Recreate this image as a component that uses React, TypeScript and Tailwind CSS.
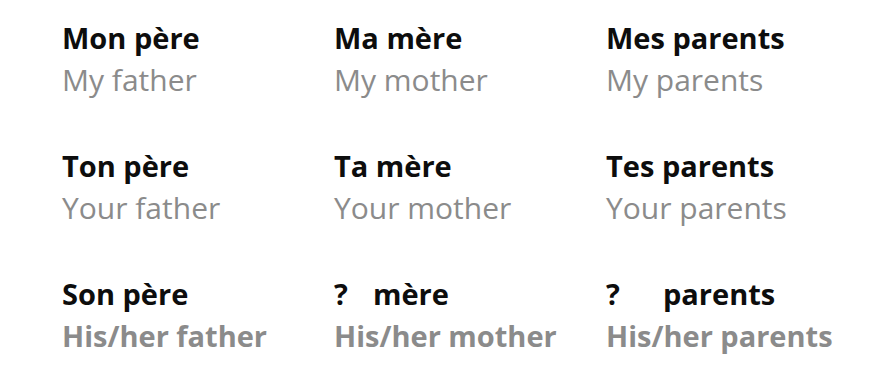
import React from 'react';

type Cell = {
  fr: React.ReactNode;
  en: string;
};

// possessive adjective table, three rows by three columns
const rows: Cell[][] = [
  [
    { fr: 'Mon père', en: 'My father' },
    { fr: 'Ma mère', en: 'My mother' },
    { fr: 'Mes parents', en: 'My parents' },
  ],
  [
    { fr: 'Ton père', en: 'Your father' },
    { fr: 'Ta mère', en: 'Your mother' },
    { fr: 'Tes parents', en: 'Your parents' },
  ],
  [
    { fr: 'Son père', en: 'His/her father' },
    {
      fr: (
        <>
          <span className="inline-block w-[39px]">?</span>mère
        </>
      ),
      en: 'His/her mother',
    },
    {
      fr: (
        <>
          <span className="inline-block w-[57px]">?</span>parents
        </>
      ),
      en: 'His/her parents',
    },
  ],
];

export default function App() {
  return (
    <div
      className="w-[894px] h-[370px] bg-white overflow-hidden pt-[18px] pl-[62px]"
      style={{ fontFamily: '"Open Sans", "Noto Sans", sans-serif' }}
    >
      <div className="flex flex-col gap-[44px]">
        {rows.map((row, r) => (
          <div key={r} className="grid grid-cols-[272px_272px_1fr]">
            {row.map((cell, c) => (
              <div key={c} className="flex flex-col whitespace-nowrap">
                <span className="text-[29px] leading-[40px] font-bold text-[#0d0d0d]">
                  {cell.fr}
                </span>
                <span
                  className={
                    r === 2
                      ? 'text-[29px] leading-[44px] font-bold text-[#8b8b8b]'
                      : 'text-[30px] leading-[44px] text-[#8b8b8b]'
                  }
                >
                  {cell.en}
                </span>
              </div>
            ))}
          </div>
        ))}
      </div>
    </div>
  );
}
